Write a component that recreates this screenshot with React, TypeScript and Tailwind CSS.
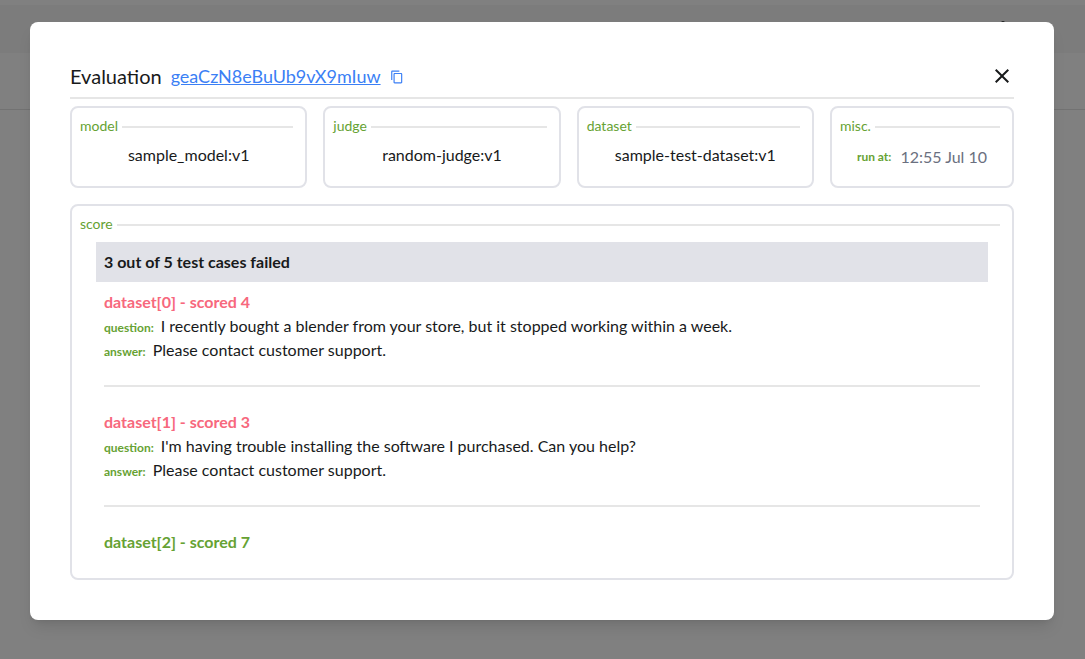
import type { ReactNode } from "react";
import { MdClose, MdContentCopy } from "react-icons/md";

type CardProps = { label: string; className?: string; children: ReactNode };

function Card({ label, className = "", children }: CardProps) {
  return (
    <section className={`rounded-lg border-2 border-[#e1e2e8] ${className}`}>
      <div className="flex items-center gap-1 pt-2 pr-3 pl-2">
        <h2 className="text-sm leading-5 text-[#66a233]">{label}</h2>
        <div className="mt-0.5 h-0.5 flex-1 bg-[#e6e6e6]" />
      </div>
      {children}
    </section>
  );
}

type TestCase = {
  index: number;
  score: number;
  passed: boolean;
  fields: { name: string; value: string }[];
};

const testCases: TestCase[] = [
  {
    index: 0,
    score: 4,
    passed: false,
    fields: [
      {
        name: "question",
        value:
          "I recently bought a blender from your store, but it stopped working within a week.",
      },
      { name: "answer", value: "Please contact customer support." },
    ],
  },
  {
    index: 1,
    score: 3,
    passed: false,
    fields: [
      {
        name: "question",
        value:
          "I'm having trouble installing the software I purchased. Can you help?",
      },
      { name: "answer", value: "Please contact customer support." },
    ],
  },
  { index: 2, score: 7, passed: true, fields: [] },
];

function TestCaseItem({ item }: { item: TestCase }) {
  return (
    <li className="group">
      <h3
        className={`font-bold ${item.passed ? "text-[#66a233]" : "text-[#f7687d]"}`}
      >
        dataset[{item.index}] - scored {item.score}
      </h3>
      {item.fields.map((field) => (
        <p key={field.name}>
          <span className="mr-[7px] text-xs font-bold text-[#66a233]">
            {field.name}:
          </span>
          {field.value}
        </p>
      ))}
      <div className="my-4 flex h-4 items-center group-last:hidden">
        <div className="h-0.5 flex-1 bg-[#e6e6e6]" />
      </div>
    </li>
  );
}

export default function App() {
  return (
    <div className="relative min-h-screen bg-[#808080] font-['Lato',sans-serif] text-base text-[#181a1b]">
      <div className="border-b border-[#727272] pt-[5px] pb-14">
        <div className="h-12 bg-[#7c7c7c]" />
      </div>
      <div className="absolute top-[21px] right-20 size-1 rounded-full bg-[#181a1b]" />

      <div className="absolute inset-0 pt-[22px] pr-[31px] pl-[30px]">
        <div
          role="dialog"
          aria-labelledby="dialog-title"
          className="mx-auto max-w-5xl rounded-lg bg-white p-10 shadow-lg"
        >
          <header className="flex items-center justify-between border-b-2 border-[#e6e6e6] pb-[7px]">
            <div className="flex items-center gap-[9px]">
              <h1 id="dialog-title" className="text-xl leading-7">
                Evaluation
              </h1>
              <a href="#evaluation" className="text-lg leading-7 text-[#3b7ff5] underline">
                geaCzN8eBuUb9vX9mIuw
              </a>
              <button type="button" aria-label="Copy id" className="pt-0.5 text-[#3b7ff5]">
                <MdContentCopy size={14} />
              </button>
            </div>
            <button type="button" aria-label="Close">
              <MdClose size={24} />
            </button>
          </header>

          <div className="mt-[7px] grid grid-cols-[1fr_1fr_1fr_184px] gap-4">
            <Card label="model" className="pb-[19px]">
              <p className="pt-[7px] text-center">sample_model:v1</p>
            </Card>
            <Card label="judge" className="pb-[19px]">
              <p className="pt-[7px] text-center">random-judge:v1</p>
            </Card>
            <Card label="dataset" className="pb-[19px]">
              <p className="pt-[7px] text-center">sample-test-dataset:v1</p>
            </Card>
            <Card label="misc." className="pb-4">
              <p className="flex items-center justify-center gap-[9px] pt-[9px]">
                <span className="text-xs font-bold text-[#66a233]">run at:</span>
                <span className="text-[#6b7080]">12:55 Jul 10</span>
              </p>
            </Card>
          </div>

          <Card label="score" className="mt-4">
            <div className="px-6 pt-2 pb-6">
              <p className="bg-[#e1e2e8] p-2 font-bold">
                3 out of 5 test cases failed
              </p>
              <ul className="px-2 pt-2">
                {testCases.map((item) => (
                  <TestCaseItem key={item.index} item={item} />
                ))}
              </ul>
            </div>
          </Card>
        </div>
      </div>
    </div>
  );
}
